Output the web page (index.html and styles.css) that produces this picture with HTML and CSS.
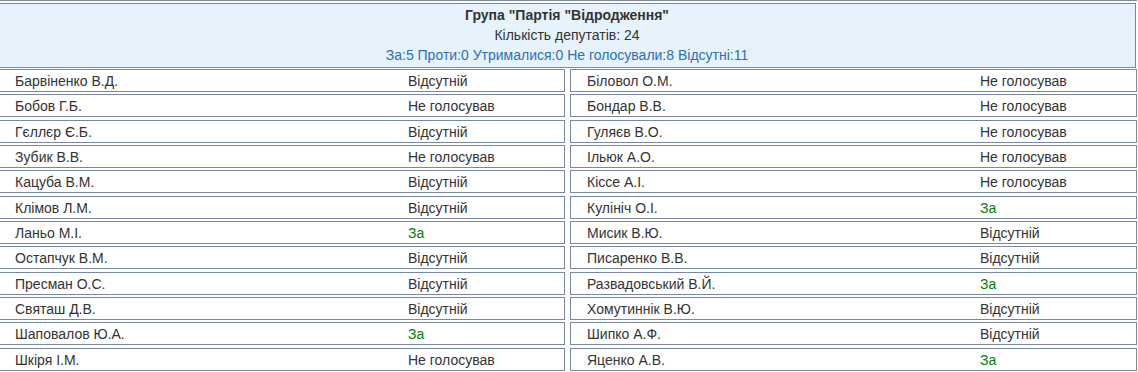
FILE: index.html
```html
<!DOCTYPE html>
<html lang="uk">
<head>
<meta charset="utf-8">
<title>Група "Партія "Відродження"</title>
<link rel="stylesheet" href="styles.css">
</head>
<body>
<div class="page">
  <div class="top-rule"></div>
  <div class="group-head">
    <div class="group-title">Група "Партія "Відродження"</div>
    <div class="group-count">Кількість депутатів: 24</div>
    <div class="group-stats">За:5 Проти:0 Утрималися:0 Не голосували:8 Відсутні:11</div>
  </div>
  <div class="deputies">
    <div class="dep"><span class="name">Барвіненко В.Д.</span><span class="vote">Відсутній</span></div>
    <div class="dep"><span class="name">Біловол О.М.</span><span class="vote">Не голосував</span></div>
    <div class="dep"><span class="name">Бобов Г.Б.</span><span class="vote">Не голосував</span></div>
    <div class="dep"><span class="name">Бондар В.В.</span><span class="vote">Не голосував</span></div>
    <div class="dep"><span class="name">Гєллєр Є.Б.</span><span class="vote">Відсутній</span></div>
    <div class="dep"><span class="name">Гуляєв В.О.</span><span class="vote">Не голосував</span></div>
    <div class="dep"><span class="name">Зубик В.В.</span><span class="vote">Не голосував</span></div>
    <div class="dep"><span class="name">Ільюк А.О.</span><span class="vote">Не голосував</span></div>
    <div class="dep"><span class="name">Кацуба В.М.</span><span class="vote">Відсутній</span></div>
    <div class="dep"><span class="name">Кіссе А.І.</span><span class="vote">Не голосував</span></div>
    <div class="dep"><span class="name">Клімов Л.М.</span><span class="vote">Відсутній</span></div>
    <div class="dep"><span class="name">Кулініч О.І.</span><span class="vote vote-yes">За</span></div>
    <div class="dep"><span class="name">Ланьо М.І.</span><span class="vote vote-yes">За</span></div>
    <div class="dep"><span class="name">Мисик В.Ю.</span><span class="vote">Відсутній</span></div>
    <div class="dep"><span class="name">Остапчук В.М.</span><span class="vote">Відсутній</span></div>
    <div class="dep"><span class="name">Писаренко В.В.</span><span class="vote">Відсутній</span></div>
    <div class="dep"><span class="name">Пресман О.С.</span><span class="vote">Відсутній</span></div>
    <div class="dep"><span class="name">Развадовський В.Й.</span><span class="vote vote-yes">За</span></div>
    <div class="dep"><span class="name">Святаш Д.В.</span><span class="vote">Відсутній</span></div>
    <div class="dep"><span class="name">Хомутиннік В.Ю.</span><span class="vote">Відсутній</span></div>
    <div class="dep"><span class="name">Шаповалов Ю.А.</span><span class="vote vote-yes">За</span></div>
    <div class="dep"><span class="name">Шипко А.Ф.</span><span class="vote">Відсутній</span></div>
    <div class="dep"><span class="name">Шкіря І.М.</span><span class="vote">Не голосував</span></div>
    <div class="dep"><span class="name">Яценко А.В.</span><span class="vote vote-yes">За</span></div>
  </div>
</div>
</body>
</html>
```
FILE: styles.css
```css
html, body {
  margin: 0;
  padding: 0;
  background: #ffffff;
  overflow: hidden;
}

body {
  font-family: Arial, "Liberation Sans", sans-serif;
  font-size: 14px;
  color: #333333;
}

.page {
  width: 1139px;
  margin-left: -2px;
}

.top-rule {
  height: 0;
  border-top: 1px solid #7889a8;
  margin-bottom: 2px;
}

.group-head {
  box-sizing: border-box;
  width: 1138px;
  height: 65px;
  border: 1px solid #7889a8;
  background: #e6f2fc;
  text-align: center;
  line-height: 20px;
  padding-top: 1px;
  margin-bottom: 1px;
}

.group-title {
  font-weight: bold;
  color: #333333;
}

.group-count {
  color: #333333;
}

.group-stats {
  color: #2f6fb7;
}

.deputies {
  display: grid;
  grid-template-columns: 567px 567px;
  column-gap: 5px;
  row-gap: 2.35px;
}

.dep {
  box-sizing: border-box;
  height: 23px;
  border: 1px solid #7889a8;
  display: grid;
  grid-template-columns: 393px 1fr;
  align-items: center;
  padding-left: 16px;
  padding-top: 1px;
  line-height: 20px;
}

.vote-yes {
  color: #008000;
}
```
